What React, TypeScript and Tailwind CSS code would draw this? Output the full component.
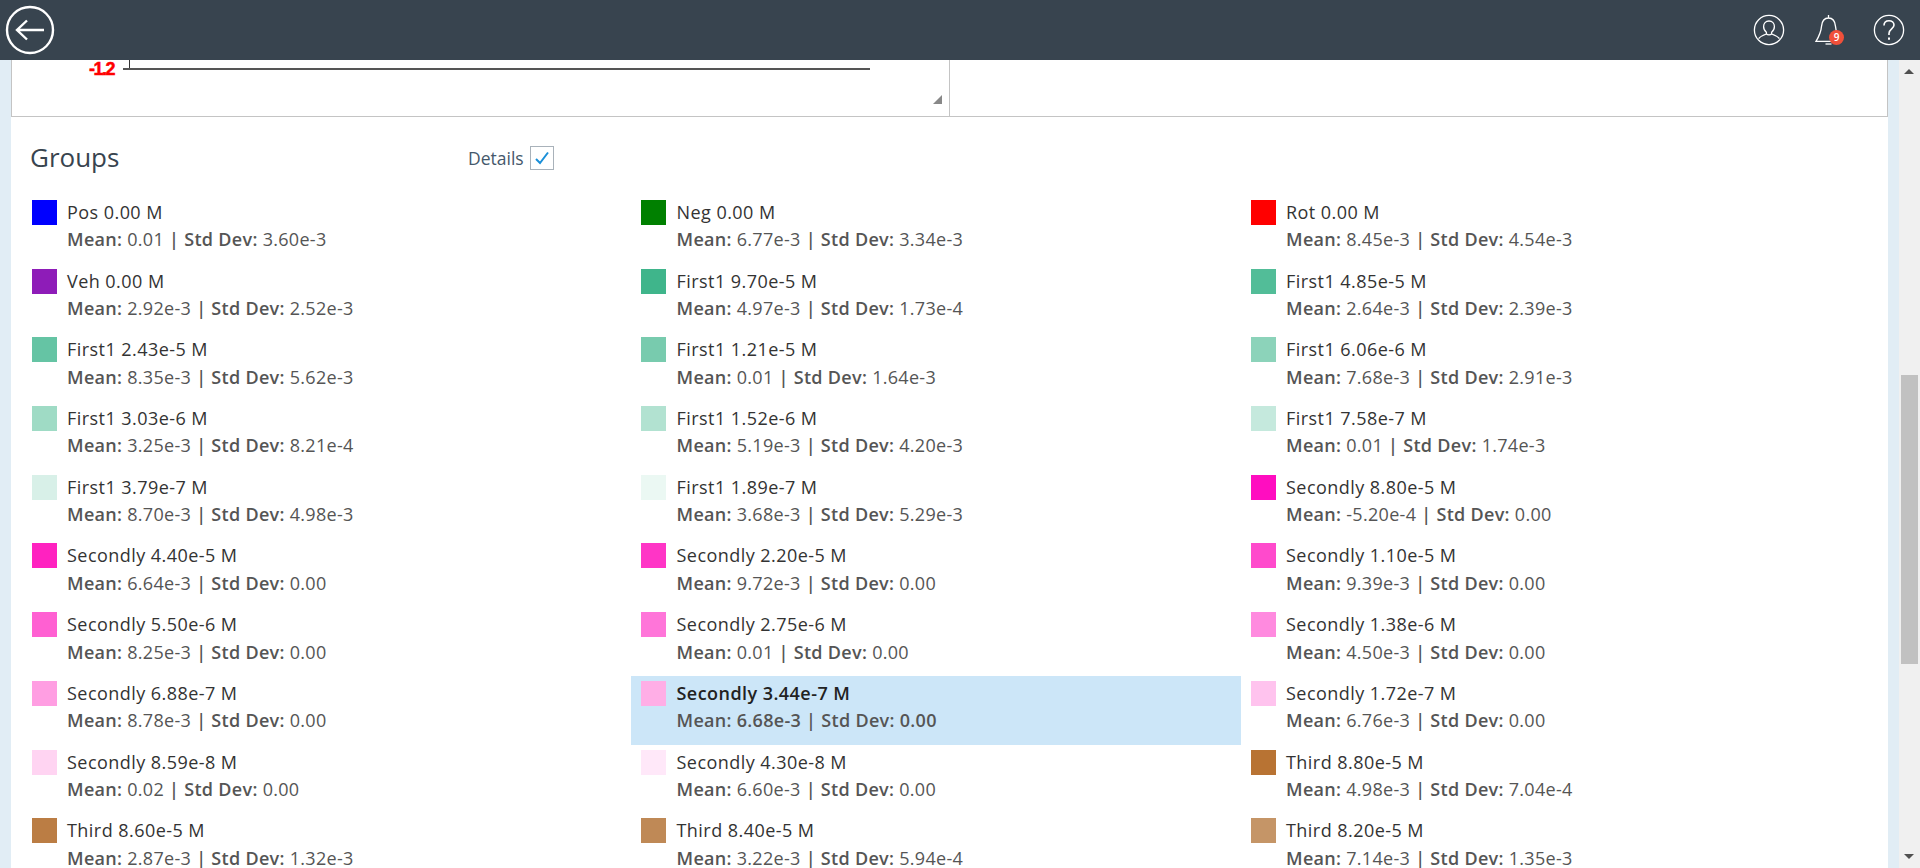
import React from 'react';

type Group = { name: string; mean: string; std: string; color: string; selected?: boolean };

const groups: Group[] = [
  { name: 'Pos 0.00 M', mean: '0.01', std: '3.60e-3', color: 'bg-[#0000ff]' },
  { name: 'Neg 0.00 M', mean: '6.77e-3', std: '3.34e-3', color: 'bg-[#008000]' },
  { name: 'Rot 0.00 M', mean: '8.45e-3', std: '4.54e-3', color: 'bg-[#ff0000]' },
  { name: 'Veh 0.00 M', mean: '2.92e-3', std: '2.52e-3', color: 'bg-[#8e1cb8]' },
  { name: 'First1 9.70e-5 M', mean: '4.97e-3', std: '1.73e-4', color: 'bg-[#3fb58b]' },
  { name: 'First1 4.85e-5 M', mean: '2.64e-3', std: '2.39e-3', color: 'bg-[#52bd98]' },
  { name: 'First1 2.43e-5 M', mean: '8.35e-3', std: '5.62e-3', color: 'bg-[#65c4a4]' },
  { name: 'First1 1.21e-5 M', mean: '0.01', std: '1.64e-3', color: 'bg-[#78cbae]' },
  { name: 'First1 6.06e-6 M', mean: '7.68e-3', std: '2.91e-3', color: 'bg-[#8cd3ba]' },
  { name: 'First1 3.03e-6 M', mean: '3.25e-3', std: '8.21e-4', color: 'bg-[#9fdbc5]' },
  { name: 'First1 1.52e-6 M', mean: '5.19e-3', std: '4.20e-3', color: 'bg-[#b2e2d1]' },
  { name: 'First1 7.58e-7 M', mean: '0.01', std: '1.74e-3', color: 'bg-[#c5e9dd]' },
  { name: 'First1 3.79e-7 M', mean: '8.70e-3', std: '4.98e-3', color: 'bg-[#d8f0e8]' },
  { name: 'First1 1.89e-7 M', mean: '3.68e-3', std: '5.29e-3', color: 'bg-[#ebf8f3]' },
  { name: 'Secondly 8.80e-5 M', mean: '-5.20e-4', std: '0.00', color: 'bg-[#ff0dc0]' },
  { name: 'Secondly 4.40e-5 M', mean: '6.64e-3', std: '0.00', color: 'bg-[#ff22c0]' },
  { name: 'Secondly 2.20e-5 M', mean: '9.72e-3', std: '0.00', color: 'bg-[#ff35c6]' },
  { name: 'Secondly 1.10e-5 M', mean: '9.39e-3', std: '0.00', color: 'bg-[#ff4acc]' },
  { name: 'Secondly 5.50e-6 M', mean: '8.25e-3', std: '0.00', color: 'bg-[#ff60d2]' },
  { name: 'Secondly 2.75e-6 M', mean: '0.01', std: '0.00', color: 'bg-[#ff75d9]' },
  { name: 'Secondly 1.38e-6 M', mean: '4.50e-3', std: '0.00', color: 'bg-[#ff8adf]' },
  { name: 'Secondly 6.88e-7 M', mean: '8.78e-3', std: '0.00', color: 'bg-[#ff9ee2]' },
  { name: 'Secondly 3.44e-7 M', mean: '6.68e-3', std: '0.00', color: 'bg-[#ffaee6]', selected: true },
  { name: 'Secondly 1.72e-7 M', mean: '6.76e-3', std: '0.00', color: 'bg-[#ffc3ee]' },
  { name: 'Secondly 8.59e-8 M', mean: '0.02', std: '0.00', color: 'bg-[#ffd4f2]' },
  { name: 'Secondly 4.30e-8 M', mean: '6.60e-3', std: '0.00', color: 'bg-[#ffe8f9]' },
  { name: 'Third 8.80e-5 M', mean: '4.98e-3', std: '7.04e-4', color: 'bg-[#b87333]' },
  { name: 'Third 8.60e-5 M', mean: '2.87e-3', std: '1.32e-3', color: 'bg-[#bb7d44]' },
  { name: 'Third 8.40e-5 M', mean: '3.22e-3', std: '5.94e-4', color: 'bg-[#bf8956]' },
  { name: 'Third 8.20e-5 M', mean: '7.14e-3', std: '1.35e-3', color: 'bg-[#c59567]' },
];

const BackIcon = () => (
  <svg width="50" height="50" viewBox="0 0 50 50" fill="none" stroke="white" strokeWidth="2.4">
    <circle cx="25" cy="25" r="23" />
    <path d="M39 25H12M22 15.500L12 25L22 34.500" />
  </svg>
);

const UserIcon = () => (
  <svg width="32" height="32" viewBox="0 0 32 32" fill="none" stroke="white" strokeWidth="1.3">
    <circle cx="16" cy="16" r="14.600" />
    <path d="M16 7c-3.400 0-5.400 2.500-5.400 5.600 0 2.500 1 4.400 2.800 5.600v1.800c-2.800 1-5.800 2.200-7.800 4.600M16 7c3.400 0 5.400 2.500 5.400 5.600 0 2.500-1 4.400-2.800 5.600v1.800c2.800 1 5.800 2.200 7.800 4.600M13.400 20c1.200 1.200 4 1.200 5.200 0" />
  </svg>
);

const BellIcon = () => (
  <svg width="32" height="32" viewBox="0 0 32 32" fill="none" stroke="white" strokeWidth="1.3">
    <path d="M15.500 1v3M15.500 4c-5.200 0-6.600 4-7 8.400-.4 5-2.400 9.800-5.500 15h25c-3.100-5.200-5.100-10-5.500-15-.4-4.400-1.800-8.400-7-8.400z" />
    <path d="M12.500 30h6" />
  </svg>
);

const HelpIcon = () => (
  <svg width="32" height="32" viewBox="0 0 32 32" fill="none" stroke="white" strokeWidth="1.3">
    <circle cx="16" cy="16" r="14.600" />
    <path d="M11 11.500c0-3 2.200-4.800 5-4.800s5 1.800 5 4.400c0 3.800-5 4-5 8.400v1.500" strokeWidth="1.600" />
    <path d="M16 23.500v2.200" strokeWidth="2" />
  </svg>
);

const GroupRow = ({ group }: { group: Group }) => {
  const sel = group.selected;
  return (
    <div className={`flex h-[68.7px] pl-[10px] pt-[5px] ${sel ? 'bg-[#cce6f8]' : ''}`}>
      <div className={`h-[25px] w-[25px] shrink-0 ${group.color}`}></div>
      <div className="ml-[10.5px] -mt-[1px] text-[18px] leading-[27.4px]">
        <div className={`tracking-[0.45px] ${sel ? 'font-semibold text-[#222]' : 'text-[#333]'}`}>{group.name}</div>
        <div className={`tracking-[0.3px] ${sel ? 'font-semibold' : ''} text-[#555]`}>
          <span className="font-semibold">Mean:</span> {group.mean} <span className="font-semibold">|</span>{' '}
          <span className="font-semibold">Std Dev:</span> {group.std}
        </div>
      </div>
    </div>
  );
};

export default function App() {
  return (
    <div className="flex h-screen flex-col overflow-hidden bg-[#e1edf5] font-['Open_Sans',sans-serif]">
      <header className="flex h-[60px] shrink-0 items-center justify-between bg-[#38444f] pl-[5px] pr-[15px]">
        <BackIcon />
        <div className="flex items-center gap-[28px]">
          <UserIcon />
          <div className="relative">
            <BellIcon />
            <div className="absolute left-[16px] top-[16px] flex h-[15px] w-[15px] items-center justify-center rounded-full bg-[#f0503a] text-[10px] font-semibold text-white">
              9
            </div>
          </div>
          <HelpIcon />
        </div>
      </header>

      <div className="flex min-h-0 flex-1">
        <main className="ml-[11px] mr-[11px] min-w-0 flex-1 overflow-hidden bg-white">
          {/* top chart panel, scrolled so only its bottom shows */}
          <div className="flex h-[57px] border-x border-b border-[#c4c4c4]">
            <div className="relative w-[938px] border-r border-[#c4c4c4]">
              <div className="absolute left-[77px] top-0 font-['Liberation_Sans',sans-serif] text-[18px] font-bold leading-[18px] tracking-[-1.5px] text-[#ff0000] [-webkit-text-stroke:0.5px_#ff0000]">-1.2</div>
              <div className="absolute left-[117px] top-0 h-[9px] w-[1px] bg-[#333]"></div>
              <div className="absolute left-[111px] top-[8px] h-[2px] w-[747px] bg-[#555]"></div>
              <svg className="absolute bottom-[12px] right-[7px]" width="9" height="9" viewBox="0 0 9 9">
                <path d="M9 0V9H0z" fill="#888" />
              </svg>
            </div>
          </div>

          <div className="flex h-[78px] items-start pl-[19px]">
            <h2 className="mt-[22px] w-[438px] text-[26px] leading-[36px] text-[#38444f]">Groups</h2>
            <div className="mt-[29px] flex items-center gap-[6px]">
              <span className="text-[17.500px] leading-[24px] text-[#45586b]">Details</span>
              <div className="flex h-[24px] w-[24px] items-center justify-center border border-[#a9b2ba]">
                <svg width="16" height="14" viewBox="0 0 16 14" fill="none" stroke="#1a8fd8" strokeWidth="2">
                  <path d="M2 8l4 4L14 1.500" />
                </svg>
              </div>
            </div>
          </div>

          <div className="grid w-[1839px] grid-cols-3 pl-[10.5px]">
            {groups.map((g) => (
              <GroupRow key={g.name} group={g} />
            ))}
          </div>
        </main>

        {/* scrollbar */}
        <div className="relative w-[21px] shrink-0 bg-[#f0f0f0]">
          <div className="absolute left-[5px] top-[9px] h-0 w-0 border-x-[5px] border-b-[5px] border-x-transparent border-b-[#505050]"></div>
          <div className="absolute left-[2px] top-[315px] h-[289px] w-[17px] bg-[#c1c1c1]"></div>
          <div className="absolute bottom-[9px] left-[5px] h-0 w-0 border-x-[5px] border-t-[5px] border-x-transparent border-t-[#505050]"></div>
        </div>
      </div>
    </div>
  );
}
